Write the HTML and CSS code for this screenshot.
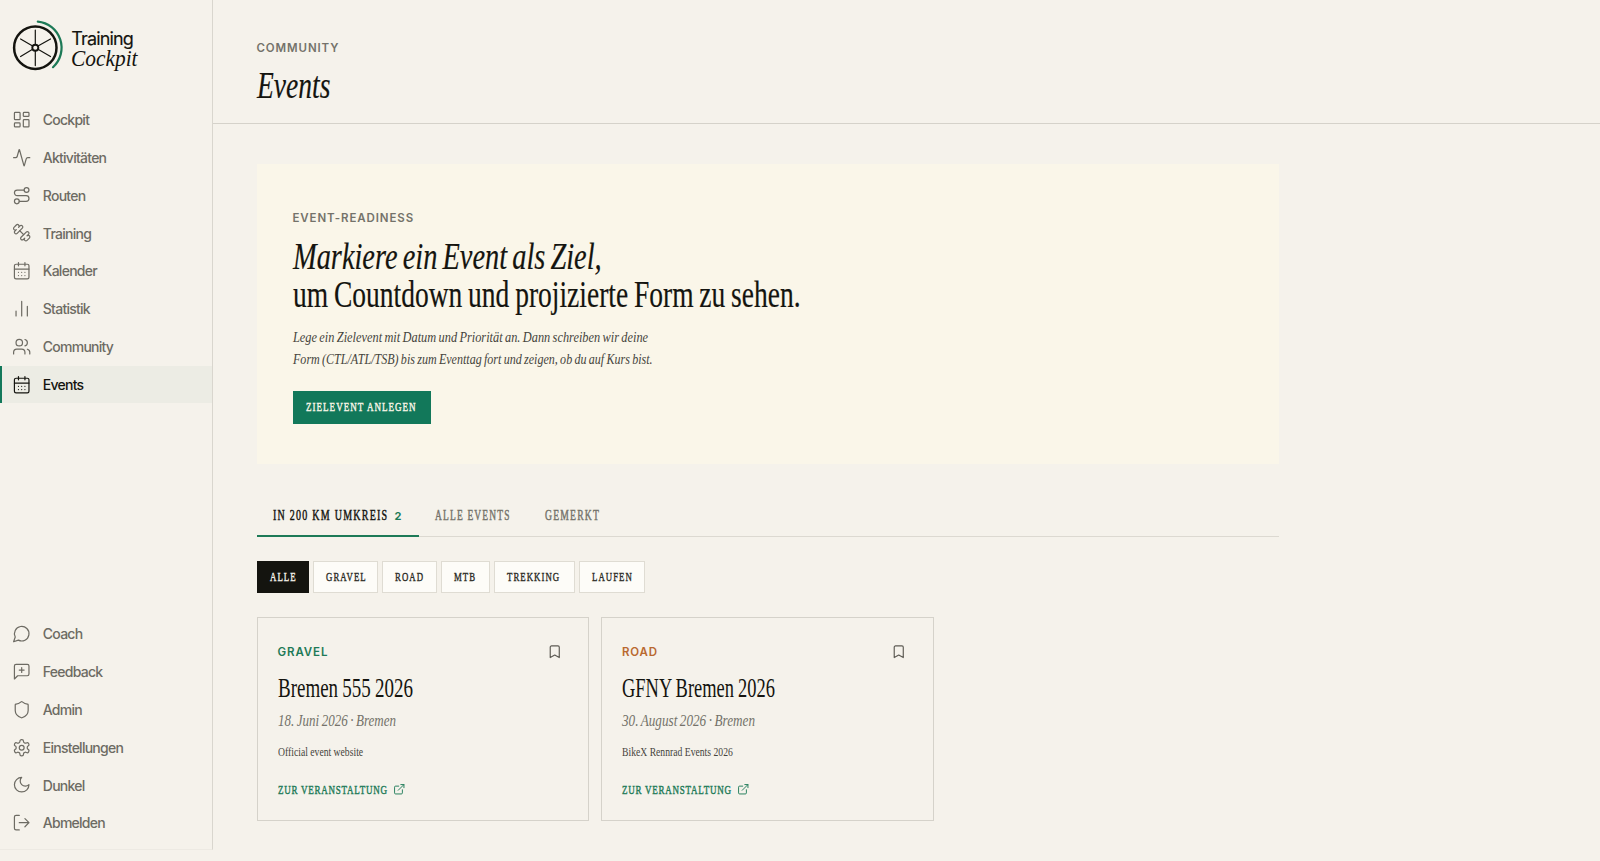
FILE: index.html
```html
<!DOCTYPE html>
<html lang="de">
<head>
<meta charset="utf-8">
<title>Training Cockpit – Events</title>
<link rel="stylesheet" href="styles.css">
</head>
<body>
<svg class="defs" width="0" height="0">
  <symbol id="calendar" viewBox="0 0 24 24"><path d="M8 2v4M16 2v4"/><rect x="3" y="4" width="18" height="18" rx="2"/><path d="M3 10h18M8 14h.01M12 14h.01M16 14h.01M8 18h.01M12 18h.01M16 18h.01"/></symbol>
  <symbol id="bookmark" viewBox="0 0 24 24"><path d="m19 21-7-4-7 4V5a2 2 0 0 1 2-2h10a2 2 0 0 1 2 2v16z"/></symbol>
  <symbol id="external" viewBox="0 0 24 24"><path d="M15 3h6v6M10 14 21 3M18 13v6a2 2 0 0 1-2 2H5a2 2 0 0 1-2-2V8a2 2 0 0 1 2-2h6"/></symbol>
</svg>
<div class="app">
  <aside class="sidebar">
    <a class="brand">
      <svg class="brand-mark" viewBox="0 0 52 54">
        <circle cx="23.3" cy="28.7" r="21.2" fill="none" stroke="#14140f" stroke-width="2.5"/>
        <path d="M25.8 2.6A26.3 26.3 0 0 1 41 48.2" fill="none" stroke="#1d7a57" stroke-width="2.2" stroke-linecap="round"/>
        <path d="M23.3 25.6V11M23.3 31.8V46.6M20.6 27.1 8.6 20M26 30.3 38.5 37.5M26 27.1 38.5 20M20.6 30.3 8.6 37.5" stroke="#14140f" stroke-width="1.2"/>
        <circle cx="23.3" cy="28.7" r="3" fill="none" stroke="#14140f" stroke-width="1.9"/>
      </svg>
      <span class="brand-name"><span class="brand-top">Training</span><span class="brand-bottom cond">Cockpit</span></span>
    </a>
    <nav class="nav">
      <a class="nav-item"><svg class="icon" viewBox="0 0 24 24"><rect x="3" y="3" width="7" height="9" rx="1"/><rect x="14" y="3" width="7" height="5" rx="1"/><rect x="14" y="12" width="7" height="9" rx="1"/><rect x="3" y="16" width="7" height="5" rx="1"/></svg>Cockpit</a>
      <a class="nav-item"><svg class="icon" viewBox="0 0 24 24"><path d="M22 12h-2.48a2 2 0 0 0-1.93 1.46l-2.35 8.36a.25.25 0 0 1-.48 0L9.24 2.18a.25.25 0 0 0-.48 0l-2.35 8.36A2 2 0 0 1 4.49 12H2"/></svg>Aktivitäten</a>
      <a class="nav-item"><svg class="icon" viewBox="0 0 24 24"><circle cx="6" cy="19" r="3"/><path d="M9 19h8.5a3.5 3.5 0 0 0 0-7h-11a3.5 3.5 0 0 1 0-7H15"/><circle cx="18" cy="5" r="3"/></svg>Routen</a>
      <a class="nav-item"><svg class="icon" viewBox="0 0 24 24"><path d="M14.4 14.4 9.6 9.6"/><path d="M18.657 21.485a2 2 0 1 1-2.829-2.828l-1.767 1.768a2 2 0 1 1-2.829-2.829l6.364-6.364a2 2 0 1 1 2.829 2.829l-1.768 1.767a2 2 0 1 1 2.828 2.829z"/><path d="M6.404 12.768a2 2 0 1 1-2.829-2.829l1.768-1.767a2 2 0 1 1-2.828-2.829l2.828-2.828a2 2 0 1 1 2.829 2.828l1.767-1.768a2 2 0 1 1 2.829 2.829z"/></svg>Training</a>
      <a class="nav-item"><svg class="icon"><use href="#calendar"/></svg>Kalender</a>
      <a class="nav-item"><svg class="icon" viewBox="0 0 24 24"><path d="M5 21v-6M12 21V3M19 21V9"/></svg>Statistik</a>
      <a class="nav-item"><svg class="icon" viewBox="0 0 24 24"><path d="M16 21v-2a4 4 0 0 0-4-4H6a4 4 0 0 0-4 4v2"/><circle cx="9" cy="7" r="4"/><path d="M22 21v-2a4 4 0 0 0-3-3.87M16 3.13a4 4 0 0 1 0 7.75"/></svg>Community</a>
      <a class="nav-item active"><svg class="icon"><use href="#calendar"/></svg>Events</a>
    </nav>
    <nav class="nav nav-bottom">
      <a class="nav-item"><svg class="icon" viewBox="0 0 24 24"><path d="M7.9 20A9 9 0 1 0 4 16.1L2 22Z"/></svg>Coach</a>
      <a class="nav-item"><svg class="icon" viewBox="0 0 24 24"><path d="M21 15a2 2 0 0 1-2 2H7l-4 4V5a2 2 0 0 1 2-2h14a2 2 0 0 1 2 2zM12 7v6M9 10h6"/></svg>Feedback</a>
      <a class="nav-item"><svg class="icon" viewBox="0 0 24 24"><path d="M20 13c0 5-3.5 7.5-7.66 8.95a1 1 0 0 1-.67-.01C7.5 20.5 4 18 4 13V6a1 1 0 0 1 1-1c2 0 4.5-1.2 6.24-2.72a1.17 1.17 0 0 1 1.52 0C14.51 3.81 17 5 19 5a1 1 0 0 1 1 1z"/></svg>Admin</a>
      <a class="nav-item"><svg class="icon" viewBox="0 0 24 24"><path d="M12.22 2h-.44a2 2 0 0 0-2 2v.18a2 2 0 0 1-1 1.73l-.43.25a2 2 0 0 1-2 0l-.15-.08a2 2 0 0 0-2.73.73l-.22.38a2 2 0 0 0 .73 2.73l.15.1a2 2 0 0 1 1 1.72v.51a2 2 0 0 1-1 1.74l-.15.09a2 2 0 0 0-.73 2.73l.22.38a2 2 0 0 0 2.73.73l.15-.08a2 2 0 0 1 2 0l.43.25a2 2 0 0 1 1 1.73V20a2 2 0 0 0 2 2h.44a2 2 0 0 0 2-2v-.18a2 2 0 0 1 1-1.73l.43-.25a2 2 0 0 1 2 0l.15.08a2 2 0 0 0 2.73-.73l.22-.39a2 2 0 0 0-.73-2.73l-.15-.08a2 2 0 0 1-1-1.74v-.5a2 2 0 0 1 1-1.74l.15-.09a2 2 0 0 0 .73-2.73l-.22-.38a2 2 0 0 0-2.73-.73l-.15.08a2 2 0 0 1-2 0l-.43-.25a2 2 0 0 1-1-1.73V4a2 2 0 0 0-2-2z"/><circle cx="12" cy="12" r="3"/></svg>Einstellungen</a>
      <a class="nav-item"><svg class="icon" viewBox="0 0 24 24"><path d="M12 3a6 6 0 0 0 9 9 9 9 0 1 1-9-9Z"/></svg>Dunkel</a>
      <a class="nav-item"><svg class="icon" viewBox="0 0 24 24"><path d="M9 21H5a2 2 0 0 1-2-2V5a2 2 0 0 1 2-2h4M16 17l5-5-5-5M21 12H9"/></svg>Abmelden</a>
    </nav>
  </aside>
  <main class="main">
    <header class="page-head">
      <div class="eyebrow">COMMUNITY</div>
      <h1 class="page-title"><em class="cond">Events</em></h1>
    </header>
    <div class="content">
      <section class="hero">
        <div class="eyebrow">EVENT-READINESS</div>
        <h2 class="hero-title"><em class="cond line-one">Markiere ein Event als Ziel,</em><span class="cond line-two">um Countdown und projizierte Form zu sehen.</span></h2>
        <p class="hero-text"><span class="cond">Lege ein Zielevent mit Datum und Priorität an. Dann schreiben wir deine</span><span class="cond text-two">Form (CTL/ATL/TSB) bis zum Eventtag fort und zeigen, ob du auf Kurs bist.</span></p>
        <button class="cta"><span class="cond">ZIELEVENT ANLEGEN</span></button>
      </section>
      <div class="tabs">
        <a class="tab tab-near active"><span class="cond">IN 200 KM UMKREIS</span><b class="count">2</b></a>
        <a class="tab tab-all"><span class="cond">ALLE EVENTS</span></a>
        <a class="tab tab-saved"><span class="cond">GEMERKT</span></a>
      </div>
      <div class="chips">
        <a class="chip chip-alle active"><span class="cond">ALLE</span></a>
        <a class="chip chip-gravel"><span class="cond">GRAVEL</span></a>
        <a class="chip chip-road"><span class="cond">ROAD</span></a>
        <a class="chip chip-mtb"><span class="cond">MTB</span></a>
        <a class="chip chip-trekking"><span class="cond">TREKKING</span></a>
        <a class="chip chip-laufen"><span class="cond">LAUFEN</span></a>
      </div>
      <div class="cards">
        <article class="card gravel">
          <div class="card-head"><span class="eyebrow kind">GRAVEL</span><svg class="mark"><use href="#bookmark"/></svg></div>
          <h3 class="card-title"><span class="cond">Bremen 555 2026</span></h3>
          <p class="card-date"><span class="cond">18. Juni 2026 · Bremen</span></p>
          <p class="card-note"><span class="cond">Official event website</span></p>
          <a class="card-link"><span class="link-text"><span class="cond">ZUR VERANSTALTUNG</span></span><svg class="ext"><use href="#external"/></svg></a>
        </article>
        <article class="card road">
          <div class="card-head"><span class="eyebrow kind">ROAD</span><svg class="mark"><use href="#bookmark"/></svg></div>
          <h3 class="card-title"><span class="cond">GFNY Bremen 2026</span></h3>
          <p class="card-date"><span class="cond">30. August 2026 · Bremen</span></p>
          <p class="card-note"><span class="cond">BikeX Rennrad Events 2026</span></p>
          <a class="card-link"><span class="link-text"><span class="cond">ZUR VERANSTALTUNG</span></span><svg class="ext"><use href="#external"/></svg></a>
        </article>
      </div>
    </div>
  </main>
</div>
</body>
</html>
```
FILE: styles.css
```css
* { box-sizing: border-box; }
body { margin: 0; background: #f5f2eb; color: #14140f; font-family: Inter, "Liberation Sans", sans-serif; overflow: hidden; }
h1, h2, h3, p { margin: 0; font-weight: 400; }
.defs { position: absolute; }
svg { fill: none; stroke: currentColor; stroke-linecap: round; stroke-linejoin: round; overflow: visible; flex: none; }

/* Condensed serif: glyphs are narrowed horizontally by --k */
.cond {
  display: inline-block;
  font-family: "Liberation Serif", "Times New Roman", serif;
  white-space: nowrap;
  transform: scaleX(var(--k, .7));
  transform-origin: 0 50%;
}

.app { display: flex; height: 861px; }
.sidebar { width: 213px; height: 850px; flex: none; display: flex; flex-direction: column; border-right: 1px solid #d9d6ce; border-bottom: 1px solid #edeae3; padding-top: 19px; }
.brand { display: flex; gap: 7.3px; padding-left: 12px; height: 82.5px; }
.brand-mark { width: 52px; height: 54px; }
.brand-name { display: flex; flex-direction: column; padding-top: 9.5px; }
.brand-top { font-size: 18px; line-height: 20px; letter-spacing: -.047em; -webkit-text-stroke: .15px currentColor; }
.brand-bottom { font-size: 23.5px; line-height: 18.4px; font-style: italic; --k: .91; }

.nav { display: flex; flex-direction: column; gap: 1px; }
.nav-bottom { margin-top: auto; padding-bottom: 7.8px; }
.nav-item { display: flex; align-items: center; gap: 11.3px; height: 36.78px; padding-left: 10.1px; border-left: 2px solid transparent; font-size: 14px; font-weight: 500; letter-spacing: -.053em; color: #6d6b63; }
.nav-item.active { background: #ecece4; border-left-color: #12785a; color: #14140f; }
.icon { width: 19.4px; height: 19.4px; stroke-width: 1.5; }

.main { flex: 1; min-width: 0; }
.page-head { height: 124px; border-bottom: 1px solid #d5d2ca; padding: 40px 0 0 43.5px; }
.eyebrow { font-size: 11.5px; line-height: 16px; font-weight: 600; letter-spacing: .077em; color: #74726a; }
.page-title { margin-top: 8px; font-size: 38px; line-height: 40px; }
.page-title .cond { --k: .725; -webkit-text-stroke: .2px currentColor; }

.content { width: 1066px; padding: 40px 0 0 44px; }
.hero { height: 300px; background: #faf6e9; padding: 45.5px 35.5px 0; }
.hero-title { display: flex; flex-direction: column; margin-top: 11.2px; font-size: 38px; line-height: 38px; -webkit-text-stroke: .2px currentColor; }
.line-one { word-spacing: -.07em; --k: .747; }
.line-two { word-spacing: -.04em; --k: .724; }
.hero-text { display: flex; flex-direction: column; margin-top: 13.1px; font-size: 15.5px; line-height: 22.3px; font-style: italic; word-spacing: -.06em; color: #45443c; --k: .797; }
.hero-text .text-two { --k: .777; }
.cta { display: block; width: 138.5px; height: 33.4px; margin-top: 20.2px; padding: 0 0 0 13.5px; border: 0; background: #12785a; color: #faf6e8; text-align: left; font-size: 13.5px; line-height: 32px; letter-spacing: 1.5px; -webkit-text-stroke: .45px currentColor; }
.cta .cond { --k: .67; }

.tabs { display: flex; height: 43px; margin-top: 30px; border-bottom: 1px solid #dcd9d1; }
.tab { display: flex; height: 43px; padding: 11.6px 0 0 15.5px; font-size: 14px; line-height: 20px; letter-spacing: 1.74px; color: #74726a; -webkit-text-stroke: .45px currentColor; --k: .715; }
.tab.active { color: #14140f; border-bottom: 2px solid #1d7a57; }
.tab-near { width: 162px; }
.tab-all { width: 109.5px; padding-left: 16.2px; --k: .675; }
.tab-saved { width: 90px; padding-left: 16.5px; --k: .69; }
.tab .cond { flex: none; }
.tab-near .cond { width: 122px; }
.count { padding-top: .8px; font-size: 11px; letter-spacing: 0; color: #1d7a57; font-weight: 700; -webkit-text-stroke: 0; }

.chips { display: flex; gap: 4px; margin-top: 24px; --k: .675; }
.chip { height: 32px; padding-left: 12px; border: 1px solid #dfdcd3; background: #fdfcf8; color: #2a2a24; font-size: 13px; line-height: 29px; letter-spacing: 1.54px; -webkit-text-stroke: .4px currentColor; }
.chip.active { background: #14140f; border-color: #14140f; color: #f5f2eb; padding-left: 11.5px; }
.chip-alle { width: 51.5px; }
.chip-gravel { width: 65.6px; }
.chip-road { width: 55px; }
.chip-mtb { width: 49px; }
.chip-trekking { width: 80.6px; }
.chip-laufen { width: 66.7px; }

.cards { display: flex; gap: 12px; margin-top: 23.5px; }
.card { width: 332.3px; height: 204.5px; border: 1px solid #d5d2ca; padding: 26.3px 19.6px 0; }
.card-head { display: flex; justify-content: space-between; align-items: center; padding-right: 6.5px; height: 16px; }
.gravel .kind { color: #1d7a57; }
.road .kind { color: #b9692f; }
.mark { width: 15.5px; height: 15.5px; stroke-width: 1.8; color: #5d5b54; }
.card-title { margin-top: 13.6px; font-size: 27px; line-height: 30px; word-spacing: -.03em; --k: .703; }
.road .card-title { --k: .683; }
.card-date { margin-top: 5.8px; font-size: 17px; line-height: 22px; font-style: italic; word-spacing: -.06em; color: #74726a; --k: .767; }
.road .card-date { --k: .775; }
.card-note { margin-top: 12.2px; font-size: 12px; line-height: 16px; color: #45443c; --k: .805; }
.card-link { display: flex; align-items: center; gap: 6px; height: 16px; margin-top: 21px; color: #1d7a57; font-size: 13.5px; line-height: 16px; letter-spacing: 1.1px; --k: .668; -webkit-text-stroke: .45px currentColor; }
.link-text { width: 109px; }
.ext { width: 12.5px; height: 12.5px; stroke-width: 1.8; -webkit-text-stroke: 0; }
```
